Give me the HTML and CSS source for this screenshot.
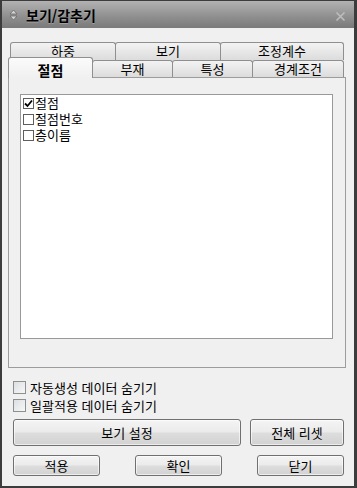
FILE: index.html
```html
<!DOCTYPE html>
<html lang="ko">
<head>
<meta charset="utf-8">
<link rel="stylesheet" href="styles.css">
</head>
<body>
<div class="window">
  <div class="titlebar">
    <svg class="ticon" width="9" height="12" viewBox="0 0 9 12">
      <path d="M4.5 1 L8 5 L1 5 Z" fill="#d4d4d4" stroke="#6a6a6a" stroke-width="0.8"/>
      <path d="M4.5 11 L8 7 L1 7 Z" fill="#d4d4d4" stroke="#6a6a6a" stroke-width="0.8"/>
    </svg>
    <span class="title">보기/감추기</span>
    <svg class="close" width="11" height="11" viewBox="0 0 11 11">
      <path d="M1.5 1.5 L9.5 9.5 M9.5 1.5 L1.5 9.5" stroke="#bdbdbd" stroke-width="1.6"/>
    </svg>
  </div>
  <div class="content">
    <div class="tabs">
      <div class="tabrow back">
        <div class="tab w1">하중</div>
        <div class="tab w1">보기</div>
        <div class="tab w2">조정계수</div>
      </div>
      <div class="tabrow front">
        <div class="tab sel">절점</div>
        <div class="tab w3">부재</div>
        <div class="tab w3">특성</div>
        <div class="tab w4">경계조건</div>
      </div>
    </div>
    <div class="panel">
      <div class="listbox">
        <div class="item"><span class="cb checked"><svg width="9" height="9" viewBox="0 0 9 9"><path d="M1 4.5 L3.5 7 L8 1.5" fill="none" stroke="#000" stroke-width="1.8"/></svg></span>절점</div>
        <div class="item"><span class="cb"></span>절점번호</div>
        <div class="item"><span class="cb"></span>층이름</div>
      </div>
    </div>
  </div>
  <div class="bottom">
    <div class="checks">
      <label class="chk"><span class="box"></span>자동생성 데이터 숨기기</label>
      <label class="chk"><span class="box"></span>일괄적용 데이터 숨기기</label>
    </div>
    <div class="btnrow1">
      <div class="btn big">보기 설정</div>
      <div class="btn reset">전체 리셋</div>
    </div>
    <div class="btnrow2">
      <div class="btn small">적용</div>
      <div class="btn small">확인</div>
      <div class="btn small">닫기</div>
    </div>
  </div>
</div>
</body>
</html>
```

FILE: styles.css
```css
* { box-sizing: border-box; }
html, body { margin: 0; padding: 0; }
body {
  font-family: "Noto Sans CJK KR", "Noto Sans", sans-serif;
  font-size: 13px;
  color: #000;
  background: #f0f0f0;
}
.window {
  width: 357px;
  height: 488px;
  background: #f0f0f0;
  border-left: 2px solid #3c3c3c;
  border-right: 3px solid #3c3c3c;
  border-bottom: 2px solid #3c3c3c;
  border-top: 1px solid #3c3c3c;
  display: flex;
  flex-direction: column;
}
.titlebar {
  height: 27px;
  background: linear-gradient(#b2b2b2, #8e8e8e 60%, #7a7a7a);
  display: flex;
  align-items: center;
  padding-left: 7px;
  padding-right: 8px;
}
.ticon { margin-right: 8px; margin-top: 1px; }
.title {
  font-weight: bold;
  font-size: 14px;
  color: #000;
  text-shadow: 0 1px 0 rgba(255,255,255,0.25);
  flex: 1;
  margin-top: 1px;
}
.close { margin-top: 3px; }
.content {
  padding: 14px 8px 0 6px;
}
.tabrow { display: flex; }
.tab {
  border: 1px solid #8f8f8f;
  border-bottom: none;
  border-radius: 3px 3px 0 0;
  background: linear-gradient(#f3f3f3, #dcdcdc);
  margin-right: -1px;
  text-align: center;
  color: #000;
}
.back {
  margin-left: 2px;
  height: 18px;
}
.back .tab { height: 18px; line-height: 16px; padding-top: 0; }
.w1 { width: 106px; }
.w2 { width: 124px; }
.front {
  margin-top: -3px;
  height: 20px;
  align-items: flex-end;
}
.front .tab { height: 17px; line-height: 15px; }
.w3 { width: 81px; }
.w4 { width: 92px; }
.tab.sel {
  width: 85px;
  height: 21px;
  margin-bottom: -1px;
  position: relative;
  z-index: 1;
  background: linear-gradient(#fbfbfb, #f0f0f0);
  font-weight: bold;
  font-size: 14px;
  line-height: 20px;
  padding-top: 2px;
}
.panel {
  height: 291px;
  border: 1px solid #9c9c9c;
  background: #f0f0f0;
  padding: 16px 12px 0 11px;
}
.listbox {
  height: 245px;
  background: #fff;
  border: 1px solid #999;
  padding-top: 0;
}
.item {
  height: 16px;
  line-height: 16px;
  display: flex;
  align-items: center;
  padding-left: 2px;
}
.cb {
  width: 11px;
  height: 11px;
  border: 1px solid #5e5e5e;
  background: #fff;
  margin-right: 1px;
  display: flex;
  align-items: center;
  justify-content: center;
}
.bottom {
  padding: 0 10px 0 11px;
}
.checks { margin-top: 10px; }
.chk {
  height: 18px;
  display: flex;
  align-items: center;
}
.box {
  width: 13px;
  height: 13px;
  border: 1px solid #8e8f8f;
  background: linear-gradient(135deg, #dcdfe3, #f7f7f7);
  margin-right: 4px;
}
.btn {
  border: 1px solid #707070;
  border-radius: 3px;
  background: linear-gradient(#f4f4f4, #ebebeb 48%, #dddddd 52%, #d2d2d2);
  text-align: center;
  box-shadow: inset 0 0 0 1px rgba(255,255,255,0.6);
}
.btnrow1 {
  margin-top: 5px;
  display: flex;
  justify-content: space-between;
}
.btn.big { width: 228px; height: 27px; line-height: 25px; }
.btn.reset { width: 94px; height: 27px; line-height: 25px; }
.btnrow2 {
  margin-top: 9px;
  display: flex;
  justify-content: space-between;
}
.btn.small { width: 87px; height: 21px; line-height: 19px; }
```
